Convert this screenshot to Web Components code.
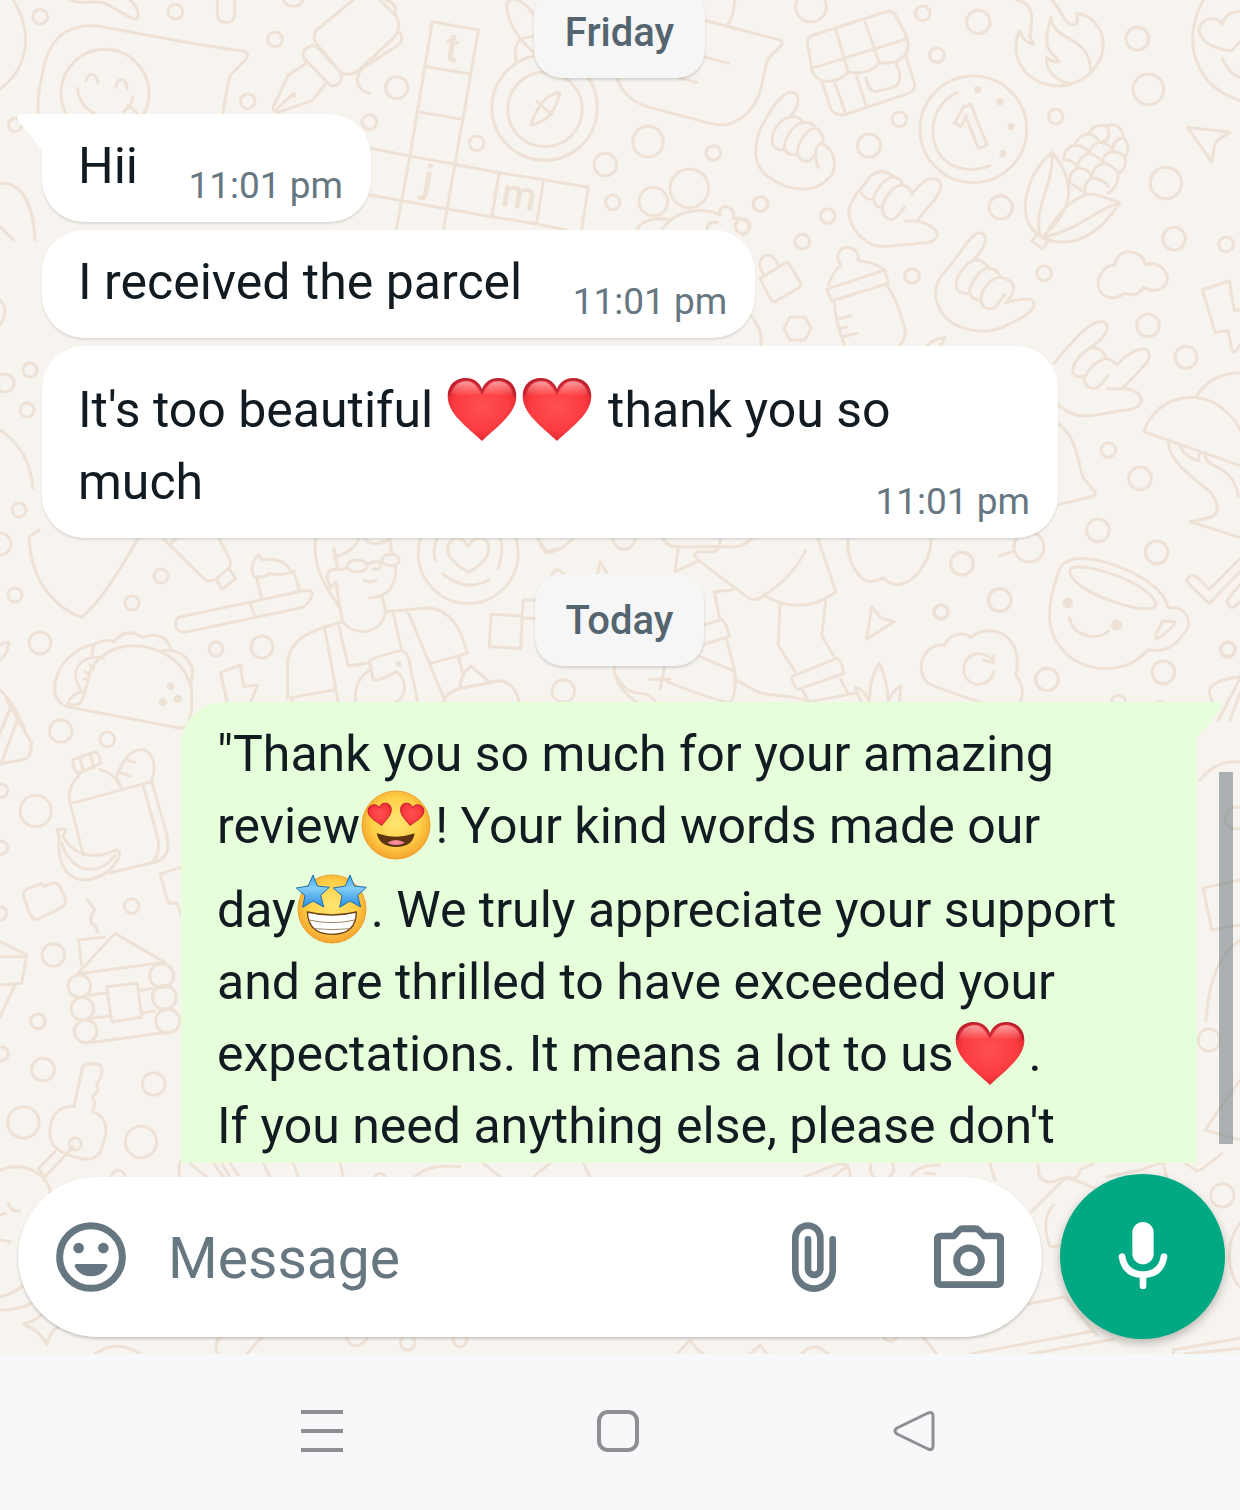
<!DOCTYPE html>
<html lang="en">
<head>
<meta charset="utf-8">
<meta name="viewport" content="width=device-width, initial-scale=1">
<title>Chat</title>
<style>
  html, body { height: 100%; margin: 0; }
  body { display: flex; flex-direction: column; background: #f7f8fa; font-family: Roboto, "Liberation Sans", sans-serif; }
  .keep { white-space: nowrap; }
</style>
</head>
<body>
<chat-screen>
  <date-chip>Friday</date-chip>
  <chat-message tail time="11:01 pm">Hii</chat-message>
  <chat-message time="11:01 pm">I received the parcel</chat-message>
  <chat-message time="11:01 pm">It's too beautiful <chat-emoji name="heart" lead></chat-emoji><chat-emoji name="heart" lead></chat-emoji> thank you so much</chat-message>
  <date-chip>Today</date-chip>
  <chat-message sent tail>"Thank you so much for your amazing <span class="keep">review<chat-emoji name="love"></chat-emoji>!</span> Your kind words made our <span class="keep">day<chat-emoji name="star" lead></chat-emoji>.</span> We truly appreciate your support and are thrilled to have exceeded your expectations. It means a lot to <span class="keep">us<chat-emoji name="heart"></chat-emoji>.</span><br>If you need anything else, please don't</chat-message>
  <message-composer slot="footer"></message-composer>
</chat-screen>
<system-nav></system-nav>

<script>
// Wallpaper doodles, grouped in patches. Each patch has its own origin and scale.
const PATCHES = [
  { at: 'translate(0 0) scale(.333333)',
    d: `M40,0 C90,80 100,190 0,268 M210,0 C250,15 280,0 310,8 C350,25 380,50 405,58 C425,55 412,15 390,0
      M652,0 V45 C655,75 700,75 704,45 V0 M850,0 C860,25 900,25 910,0
      M115,342 C108,290 125,240 132,200 C150,110 210,70 290,78 C330,82 600,140 730,153 Q750,160 738,178 L692,225 Q685,240 668,342
      M258,245 C262,215 290,215 294,250 M348,262 C352,230 378,230 382,265 M233,265 C235,310 265,330 285,342 M398,292 C396,310 385,325 370,335 M385,315 L415,342
      M1060,0 L950,90 Q935,110 948,130 L1020,215 Q1045,232 1075,212 L1185,110 Q1205,80 1190,50 L1140,0 M1160,0 Q1195,15 1185,40
      M1198,95 Q1215,115 1195,135 L1110,190 C1060,210 1060,270 1108,280
      M912,175 C900,150 935,125 955,145 L1020,215 C1035,240 1010,265 990,255 Z M918,190 L865,225 L820,320 Q818,340 840,335 L935,302 L975,255 M828,330 L870,290
      M0,550 C70,545 100,620 105,720 M0,680 L40,720`,
    rings: [[315,280,132],[121,50,22],[526,35,22],[825,118,22],[1190,263,33],[743,304,22],[1108,366,22],[45,375,20]],
    dots: [[880,285,9]] },
  { at: 'translate(360 0) scale(.333333)',
    d: `M217,65 L355,90 L285,492 L250,690 M217,65 L150,468 L108,690 M200,200 L330,222 M175,335 L302,357
      M30,445 L150,468 L418,518 L685,562 L665,690 M30,585 L130,603 L262,627 L395,650 L530,672 L620,690 M418,518 L395,650 M550,543 L530,670
      M600,278 Q545,280 512,375 Q580,365 600,278 M532,305 L575,345 M470,190 Q455,130 490,115 Q510,108 530,112
      M525,50 C480,-20 440,-10 440,20 C445,70 475,120 525,160
      M1030,60 L1260,120 Q1275,128 1255,145 L1225,175 Q1215,200 1205,260 C1185,340 1120,390 1050,370 L870,322 C820,310 785,280 770,230
      M1030,170 L1105,190 M955,233 L1010,247 M1125,0 Q1120,50 1105,72
      M830,690 C850,655 890,655 920,657 M905,690 C950,620 1040,625 1080,645 C1070,610 1130,610 1120,655 C1170,650 1180,690 1150,705 M1040,690 Q1045,660 1070,668`,
    rings: [[554,323,158],[555,328,112],[350,430,22],[864,425,46],[736,494,34],[1060,459,22],[988,565,58],[880,605,43],[758,607,22],[1201,612,22]] },
  { at: 'translate(740 0) scale(.333333)',
    d: `M148,352 C180,320 185,275 150,277 C120,280 80,350 60,390 C40,440 40,500 85,530 C150,580 230,580 270,530 C300,500 275,430 240,432 C222,440 225,480 235,503
      M148,352 C115,360 90,400 98,435 Q115,455 133,447 C130,420 160,370 190,368 Q175,345 148,352 M133,447 Q145,470 172,462 C170,430 200,385 228,385 Q215,365 190,368 M172,462 Q185,490 208,482 L226,465 M228,385 Q255,400 247,432
      M202,130 Q200,112 220,105 L440,35 Q460,32 468,48 L500,110 Q510,145 495,165 Q470,195 418,188 Q390,225 325,217 Q290,250 245,243 Q215,225 215,205 Z
      M215,205 L498,117 M288,90 L325,217 M375,65 L418,188 M245,243 L272,325 Q285,350 320,342 L505,280 Q530,270 522,245 L498,170 M285,250 L315,335 M350,230 L378,315 M378,235 Q385,275 410,275 L465,260 Q485,245 478,215 L468,190
      M652,278 C560,320 560,440 620,485 Q680,525 750,497
      M830,0 C890,10 875,70 870,110 L880,133 Q850,125 838,92 C800,180 870,265 970,257 C1070,240 1110,150 1080,90 Q1050,40 1010,42 Q1020,75 995,75 C970,70 960,20 935,0
      M933,52 C920,100 910,140 940,165 L958,185 Q940,190 920,172 C915,210 950,245 990,250 M933,52 C940,130 1050,100 1052,215
      M1390,0 C1320,130 1370,260 1500,302 M1500,35 Q1455,35 1447,75 C1440,50 1385,45 1376,90 C1385,135 1440,150 1475,152 L1500,125 M1447,175 Q1465,220 1500,232
      M937,457 C860,520 830,640 880,690 L905,712 C990,640 1020,560 937,457 M937,457 C940,560 880,620 900,705 M915,710 C960,620 1020,580 1060,582 L1140,608 C1080,700 1000,750 915,715 M1140,608 C1060,630 1020,690 915,710 M875,722 L893,703 L925,722 L908,747 Z
      M970,480 Q975,440 1005,435 Q1015,405 1045,402 Q1060,370 1100,378 Q1145,365 1150,412 Q1175,440 1155,472 Q1160,510 1135,520 Q1135,560 1105,580
      M970,480 Q1000,475 1012,505 Q1050,505 1055,535 Q1090,535 1105,560 M1005,435 Q1040,440 1047,460 Q1080,470 1090,490 Q1120,495 1135,520 M1045,402 Q1070,405 1078,425 Q1110,430 1120,455 Q1140,455 1155,472 M1100,378 Q1115,400 1100,420 Q1075,430 1078,425 Q1050,440 1047,460 Q1015,470 1012,505 Q985,520 990,548 M1150,412 Q1115,420 1120,455 Q1085,460 1090,490 Q1055,500 1055,535 Q1030,550 1035,580 M990,548 L1035,578
      M1342,382 L1470,397 Q1430,420 1425,430 L1415,485 Z
      M1125,795 Q1130,755 1170,755 Q1210,760 1217,795 C1260,780 1290,820 1280,850 Q1255,885 1210,862 Q1190,895 1155,880 C1110,910 1070,885 1075,840 Q1090,795 1125,795
      M515,585 Q515,560 487,555 Q490,540 460,530 Q425,500 390,530 C370,560 335,590 328,625 C320,660 350,715 400,735 C430,745 480,735 550,728 Q580,728 590,710 C600,690 560,668 530,663 L575,610 C590,590 615,560 595,540 C570,525 540,550 515,585 Z
      M365,580 Q375,600 400,597 C405,570 440,530 460,530 M400,597 Q405,625 428,622 C430,590 465,555 487,555 M428,622 C425,660 460,665 470,650 L495,620 M497,663 H530
      M700,780 C740,740 750,700 715,698 C685,710 650,780 610,820 C560,880 600,960 660,980 C740,1010 790,985 840,955 C880,935 895,910 870,897 Q840,895 795,908
      M700,780 C665,800 640,840 652,870 Q670,885 688,878 C690,850 720,805 745,805 Q730,775 700,780 M688,878 Q700,905 722,898 C725,865 755,830 783,833 Q770,805 745,805 M722,898 C725,930 760,935 775,910 L795,883 M783,833 Q830,840 818,880 L805,900
      M60,835 L135,790 Q145,785 150,795 L182,850 Q182,860 175,864 L105,905 Q98,908 92,898 Z M70,820 C45,790 70,755 95,768 Q105,775 115,795
      M265,855 Q280,810 303,798 C280,760 305,740 325,742 C350,745 358,770 355,782 Q400,785 435,810 M260,868 L435,810 L445,850 L275,903 Z M283,908 Q285,960 315,1040 M440,857 Q470,890 495,990 Q500,1010 478,1040 M292,958 L332,947 M300,985 L320,980 M308,1010 L350,1000
      M150,952 H195 L213,985 L195,1020 H150 L132,985 Z M35,950 Q70,990 62,1040 M558,1040 Q580,1015 615,1013 L600,1040
      M1500,930 L1483,932 L1468,842 L1387,870 L1425,997 L1465,992 L1475,1050 Q1485,1065 1500,1035`,
    rings: [[700,388,160],[213,20,46],[548,40,22],[715,66,35],[591,165,22],[1192,116,34],[1225,268,46],[478,358,22],[947,350,22],[387,437,35],[1278,549,47],[782,622,35],[62,612,22],[263,648,22],[1302,716,34],[1458,733,22],[187,725,22],[516,828,22],[913,820,22],[1224,976,34],[8,678,22]],
    dots: [[713,269,11],[780,305,11],[813,380,11],[789,461,11]] },
  { at: 'translate(940 340) scale(.333333)',
    d: `M342,70 C400,0 450,-60 490,-55 C520,-40 490,0 440,30 M440,30 C470,10 500,40 495,55 C460,70 440,90 432,120 M440,30 C400,60 390,95 405,108 Q420,112 432,108
      M432,120 C440,150 470,150 480,135 L505,105 M495,55 Q520,60 530,75 C570,35 600,20 620,30 C640,50 620,70 600,90 L548,145 C590,150 610,165 602,190 Q590,210 540,212 C470,225 430,235 400,222 Q370,210 350,190 M502,146 L548,147
      M350,247 C410,290 410,350 430,415 L465,455 Q470,465 455,470 L350,495
      M612,275 C640,180 760,140 840,200 Q885,235 900,270 M612,275 L900,377 M768,172 Q810,100 900,98 M685,310 C690,370 770,420 810,455 C840,490 840,530 800,535 L750,545 L900,593 M720,320 Q740,355 775,362 L778,340 M795,345 C800,390 880,370 895,470
      M358,690 C370,650 430,650 490,665 C580,690 670,740 685,803 C740,800 755,840 740,870 C700,930 670,935 622,930 C580,985 500,995 450,980 C370,960 330,890 328,830 Q328,770 358,690
      M390,690 C400,665 520,695 590,735 C650,770 660,800 635,805 C560,815 380,740 390,690 M388,833 C400,890 470,905 505,873 M668,843 L705,845 Q705,860 650,898 Q640,895 668,843
      M900,655 L808,748 L770,710 Q750,700 740,720 Q740,728 808,790 L900,695 M900,733 L862,780 Q865,810 885,800 L900,785 M178,648 L222,633
      M900,1010 Q820,1020 808,1050 Q810,1080 825,1095 M900,1015 L835,1140 M900,1060 L870,1140`,
    rings: [[738,52,33],[267,621,45],[505,330,22],[600,415,34],[474,571,34],[650,637,34],[66,671,34],[179,780,34],[3,815,20],[863,930,22],[670,997,34],[321,1018,34],[535,1088,22],[660,1115,30]],
    dots: [[383,789,16],[530,855,17]] },
  { at: 'translate(0 530) scale(.357143 .333333)',
    d: `M110,0 L82,20 C85,170 170,240 228,262 Q290,210 392,15 M458,28 L575,150 Q590,155 605,148 L640,115 Q650,105 640,80 L608,15 M475,45 L500,18 M605,148 L622,178 L660,145 L640,115
      M722,75 L735,90 Q790,80 812,120 Q830,130 837,182 M722,75 Q695,110 712,140 Q740,145 755,130 Q780,140 825,125 M718,142 L733,205
      M500,262 L850,182 Q885,180 870,205 Q860,230 835,235 L525,305 Q490,310 492,280 Q492,265 500,262 M700,218 L712,255
      M885,15 C870,120 920,180 955,240 M940,155 L958,270 Q970,300 1015,305 Q1070,300 1080,245 L1070,200 M1035,203 Q1110,200 1108,110 M1090,18 L1098,70 M935,55 L945,115 M935,80 Q990,70 1008,18 M1020,20 Q1030,55 1090,30
      M1028,105 Q1045,90 1070,98 M940,120 L973,115 M1065,100 Q1070,120 1045,118 M1020,150 Q1035,162 1052,150 M940,118 Q910,120 918,150 L925,175 L938,160
      M972,110 A28,18 0 1,0 1028,106 A28,18 0 1,0 972,110 M1070,92 A24,17 0 1,0 1118,88 A24,17 0 1,0 1070,92
      M958,275 C880,300 810,320 805,400 L805,505 L935,480 M818,505 V520 M908,290 L948,520 M948,285 L975,408 L1035,398 M1080,245 L1200,233 C1260,240 1290,290 1308,370 L1205,400 M1100,245 L1125,360 M1142,245 L1245,510
      M1045,450 L1035,395 Q1035,385 1120,362 Q1140,362 1145,390 L1170,520 M1045,450 Q1060,455 1110,425 Q1140,450 1130,490 Q1120,515 1100,520 M1035,420 Q990,450 995,520
      M1285,385 L1298,440 M1290,470 Q1285,440 1318,408 L1370,455 M1240,520 Q1250,485 1290,475 L1400,452 Q1440,455 1455,520
      M1171,70 A140,150 0 1,0 1451,70 A140,150 0 1,0 1171,70 M1218,90 Q1210,50 1228,18 M1395,115 Q1412,65 1400,18 M1240,132 Q1310,190 1370,148 M1311,50 Q1300,25 1275,20 C1240,50 1245,85 1311,127 C1370,95 1385,50 1350,20 Q1320,28 1311,50
      M1375,253 L1462,258 L1458,355 L1370,350 Z M1462,258 L1465,210 H1500 M1462,265 H1500 M1500,15 L1530,65 L1568,55
      M190,530 C140,520 140,430 200,375 Q235,345 262,345 Q290,325 320,335 Q350,290 400,322 Q460,300 478,355 M262,345 L258,375
      M190,530 L505,595 Q545,590 535,470 C500,330 300,300 250,430 Q240,490 225,520 Q200,530 190,520 Q200,490 240,480 M455,362 Q520,355 540,420 L535,460 M290,385 C230,370 190,420 225,475 M252,405 L262,415 M238,425 L248,432 M235,448 L245,446
      M635,515 L618,427 L673,405 L682,470 L722,465 L700,520 M0,345 Q20,335 25,338 Q20,375 0,390 M0,480 Q40,520 70,600`,
    dots: [[478,469,11],[456,516,12],[498,507,12],[1116,402,8]] },
  { at: 'translate(540 530) scale(.333333)',
    d: `M0,40 Q10,70 30,68 Q80,55 105,15 M172,135 L180,95 L205,135 M35,135 Q50,105 75,135 M365,15 Q375,50 410,50 H590 Q620,45 645,15 M415,50 L405,125 L470,95
      M540,15 Q545,60 520,65 L470,65 Q455,75 480,95 L620,200 Q645,220 670,197 Q750,150 797,62 M830,15 L888,187 Q780,260 675,197 M578,180 L523,185 L540,270
      M720,222 L715,345 L765,425 M857,215 L845,318 L885,383 M755,440 L890,385 Q905,390 912,430 L775,478 Q760,470 755,440 M787,482 L808,515 L945,490 M902,448 L925,492
      M485,287 L545,268 Q560,275 568,320 L485,345 M560,330 L585,425 L480,380 M585,425 Q590,500 570,515 Q550,522 380,455 M590,450 C640,480 650,490 700,495 Q770,500 808,515 M330,448 H390 M375,405 L360,478 M222,405 Q220,470 295,520 M230,440 Q260,490 300,490 Q330,490 350,520
      M925,15 C915,80 950,150 990,155 Q1020,150 1032,143 Q1045,165 1080,163 C1130,155 1180,80 1172,15 M995,232 L980,327 L1062,275 L1025,265 Z
      M965,520 L945,470 Q970,475 988,515 Q990,440 1018,400 Q1040,440 1045,515 Q1060,480 1083,467 L1078,520
      M1435,520 C1445,510 1460,480 1427,435 Q1440,390 1420,345 C1400,305 1340,285 1292,322 C1280,310 1240,300 1213,345 C1150,340 1120,420 1165,460 Q1180,470 1330,520 M1362,425 C1350,470 1290,480 1272,430 C1265,380 1310,350 1358,388 M1362,375 L1358,398 L1332,390`,
    rings: [[252,25,33],[1266,101,34],[1379,210,34],[1203,246,22],[70,483,34]] },
  { at: 'translate(0 700) scale(.333333)',
    d: `M20,0 L95,130 Q95,170 75,178 L0,192 M30,25 L0,100 M50,65 L5,185
      M218,180 L280,157 Q300,155 302,190 L240,218 Q220,220 218,180 M240,175 L250,215 M272,165 L282,205 M240,222 Q205,255 208,300 L250,465 M300,208 Q350,225 362,265
      M350,230 C365,180 400,140 435,150 C470,170 465,215 455,245 M350,230 L365,268 M375,178 L405,187 M362,218 L392,228 M215,310 L455,245 L500,400 Q515,470 470,485 L330,518 M430,258 L475,420 Q480,470 455,487
      M170,388 H198 L190,410 C220,470 290,480 345,450 Q365,450 355,475 C320,540 240,560 200,515 Q170,480 178,410 Z M185,430 C210,510 290,540 345,465
      M75,600 Q60,580 85,565 L125,550 Q130,565 145,555 Q170,540 180,560 L197,600 Q200,615 180,625 L115,657 Q95,662 85,630 Z M262,598 L285,630 Q265,655 275,670 Q292,680 292,695
      M550,500 L480,522 L505,610 L530,608 L550,660 M232,822 L345,700 L495,787 Z M245,795 L235,720 L312,712
      M268,885 L325,878 M272,955 L330,948 M280,1027 L500,997 M320,860 L412,850 L425,952 L335,965 Z M420,872 L455,865 M425,940 L465,933
      M0,725 L80,765 L65,850 L0,855 M0,770 H80 M45,855 L0,950
      M222,1220 L248,1100 Q260,1085 300,1095 Q312,1110 300,1135 L290,1155 L295,1170 L278,1190 L285,1210 L278,1235 C320,1250 325,1290 310,1330 C300,1385 260,1380 240,1375 C180,1360 145,1340 150,1290 C155,1230 190,1218 222,1220 Z
      M165,1355 L115,1405 L135,1430 L220,1340 M550,1370 Q530,1400 540,1430 M570,1390 L620,1430 M640,1390 L670,1430 M665,1390 L690,1430 M690,1390 L715,1425`,
    rings: [[182,93,34],[322,118,22],[3,272,20],[107,333,47],[3,443,20],[0,640,20],[395,618,22],[160,765,34],[114,964,22],[5,1061,20],[129,1109,34],[461,1152,34],[70,1267,47],[423,1326,47],[355,1433,22],[238,858,34],[247,926,34],[257,994,34],[485,827,36],[493,892,36],[503,963,36],[226,1332,18]] },
  { at: 'translate(0 1150) scale(.333333)',
    d: `M0,60 C80,30 150,80 150,130 M25,160 Q35,190 60,182 M0,195 L15,190 M0,270 L30,275 M0,480 Q80,480 120,440 M0,440 Q50,430 75,400
      M185,530 Q155,530 140,585 Q125,545 70,522 Q130,505 130,480 M285,612 Q350,565 420,612 M655,612 Q635,580 670,555 M740,612 L792,555 M1035,555 Q1050,590 1070,587 Q1095,585 1105,555
      M790,40 L810,80 M880,40 L895,80 M1020,40 L1030,80 M1125,80 Q1140,60 1155,80 M1245,80 Q1290,40 1380,50 M1450,40 L1500,80 M1600,80 L1650,40 M1750,40 L1770,80`,
    rings: [[1223,578,22],[1380,570,20]] },
  { at: 'translate(760 1150) scale(.333333)',
    d: `M135,80 L225,45 Q270,30 270,80 M220,80 L265,45 M455,80 Q465,45 540,45 M495,70 L525,72 M690,40 L705,90 M835,45 Q830,100 880,95 L905,85 Q960,90 960,60 L1000,40 M1040,80 L1140,60 L1200,40 M1210,40 L1220,80
      M815,185 L920,80 L1005,115 M880,165 Q840,210 870,290 L905,287 M805,462 L915,440 L1010,555 M630,612 L1000,543 M810,612 L1060,568 M1240,612 V600 L1440,565 M1275,612 L1440,595
      M1275,40 L1310,63 Q1320,65 1385,10 M1440,220 Q1400,270 1410,340 Q1420,400 1440,410 M480,550 L530,612 M125,612 Q160,570 205,612 M-250,612 L-210,570 Q-190,600 -170,612 M-30,612 L0,585 L20,612`,
    rings: [[366,55,35],[1387,136,35],[390,552,22]] },
  { at: 'translate(0 0)',
    d: `M0,430 Q30,450 33,488 M0,300 Q10,310 0,325 M1240,880 L1203,888 L1212,930 L1240,925 M1240,940 Q1210,960 1206,1020 M1240,1080 L1205,1130 L1240,1140 M1200,780 Q1215,760 1240,762`,
    rings: [[5,383,9],[30,370,7],[27,410,7],[19,510,7],[0,544,11],[161,576,7],[15,595,7],[132,603,7],[40,643,11],[262,647,11],[216,649,7],[1228,649,7],[1236,818,11],[1209,1040,11]] }
];

const circles = (list, cls) => (list || []).map(([x, y, r]) => `<circle class="${cls}" cx="${x}" cy="${y}" r="${r}"/>`).join('');

class ChatWallpaper extends HTMLElement {
  constructor() {
    super();
    this.attachShadow({mode: 'open'}).innerHTML = `
      <style>
        :host { display: block; background: #f7f3ee; overflow: hidden; }
        svg { display: block; width: 100%; height: 100%; }
        path, .ring { fill: none; stroke: #eee2d6; stroke-width: 3px; stroke-linejoin: round; stroke-linecap: round; vector-effect: non-scaling-stroke; }
        .dot, text { fill: #eee2d6; }
        text { font: 500 40px Roboto, sans-serif; text-anchor: middle; }
        .coin { font: bold 62px "Open Sans", sans-serif; fill: none; stroke: #eee2d6; stroke-width: 3px; }
      </style>
      <svg viewBox="0 0 1240 1354" preserveAspectRatio="xMidYMin slice" aria-hidden="true">
        ${PATCHES.map(p => `<g transform="${p.at}"><path d="${p.d}"/>${circles(p.rings, 'ring')}${circles(p.dots, 'dot')}</g>`).join('')}
        <text transform="translate(450 61) rotate(10)">t</text>
        <text transform="translate(426 192) rotate(10)">j</text>
        <text transform="translate(517 208) rotate(10)">m</text>
        <text class="coin" transform="translate(980 148) rotate(-22)">1</text>
      </svg>
    `;
  }
}
customElements.define('chat-wallpaper', ChatWallpaper);

const HEART = 'M105,201 C60,158 2,120 2,66 C2,30 28,12 56,12 C80,12 98,25 105,46 C112,25 130,12 154,12 C182,12 208,30 208,66 C208,120 150,158 105,201Z';
const STAR = 'M0,-50 L13,-17 L49,-13 L23,11 L32,46 L0,28 L-31,47 L-24,12 L-50,-11 L-14,-17Z';
const FACE = `<circle cx="105" cy="105" r="102" fill="url(#skin)" stroke="#f0a02c" stroke-width="3"/>`;
const EMOJI = {
  heart: `<path d="${HEART}" fill="url(#red)"/><path d="M6,66 C8,32 32,16 56,16 C80,16 96,30 105,54 C114,30 130,16 154,16 C180,16 202,32 204,66" fill="none" stroke="#a51f33" stroke-width="6" opacity=".75"/>
    <path d="M14,66 C16,36 36,22 57,22 C78,22 90,36 100,60Z M110,60 C120,36 132,22 153,22 C176,22 194,36 196,66Z" fill="url(#shine)"/>`,
  love: `${FACE}<g stroke="#c01625" stroke-width="8"><path transform="translate(22 38) rotate(-8 36 36) scale(.34)" d="${HEART}" fill="url(#red)"/><path transform="translate(116 38) rotate(8 36 36) scale(.34)" d="${HEART}" fill="url(#red)"/></g>
    <path d="M47,130 Q105,150 161,130 Q156,171 105,171 Q56,171 47,130Z" fill="#5f3510"/><path d="M79,158 Q105,142 132,158 Q105,172 79,158Z" fill="#f88a97"/>`,
  star: `${FACE}<path d="M31,114 Q105,132 178,114 Q178,181 105,181 Q34,181 31,114Z" fill="#fff" stroke="#6b4318" stroke-width="4"/><path d="M36,138 Q105,154 174,138 M52,164 Q105,170 158,164" fill="none" stroke="#9a8568" stroke-width="3"/>
    <g fill="url(#blue)" stroke="#1f6fae" stroke-width="3" stroke-linejoin="round"><path transform="translate(48 53)" d="${STAR}"/><path transform="translate(159 53)" d="${STAR}"/></g>`
};

class ChatEmoji extends HTMLElement {
  constructor() {
    super();
    this.attachShadow({mode: 'open'});
  }
  connectedCallback() {
    this.shadowRoot.innerHTML = `
      <style>
        :host { display: inline-block; width: 72px; height: 70px; margin: 0 2px 0 1px; vertical-align: -17px; }
        :host([lead]) { padding-top: 12px; }
        svg { display: block; width: 70px; height: 70px; overflow: visible; }
      </style>
      <svg viewBox="0 0 210 210" aria-hidden="true">
        <defs>
          <radialGradient id="red" cx=".5" cy=".45" r=".6"><stop offset="0" stop-color="#ff5050"/><stop offset=".65" stop-color="#fb3c40"/><stop offset="1" stop-color="#d7222c"/></radialGradient>
          <linearGradient id="shine" x2="0" y2="1"><stop offset="0" stop-color="#fff" stop-opacity=".5"/><stop offset="1" stop-color="#fff" stop-opacity="0"/></linearGradient>
          <radialGradient id="skin" cx=".5" cy=".45" r=".55"><stop offset="0" stop-color="#ffe673"/><stop offset=".65" stop-color="#ffcf45"/><stop offset="1" stop-color="#f4a32f"/></radialGradient>
          <linearGradient id="blue" x2="0" y2="1"><stop offset="0" stop-color="#3fa4ee"/><stop offset=".4" stop-color="#83cdf8"/><stop offset="1" stop-color="#2a8ee2"/></linearGradient>
        </defs>
        ${EMOJI[this.getAttribute('name')]}
      </svg>
    `;
  }
}
customElements.define('chat-emoji', ChatEmoji);

class DateChip extends HTMLElement {
  constructor() {
    super();
    this.attachShadow({mode: 'open'}).innerHTML = `
      <style>
        :host { display: block; align-self: center; margin: 28px 0; padding: 17px 31px 15px; border-radius: 28px; background: #f6f6f6; box-shadow: 0 2px 3px rgba(0,0,0,0.14); color: #54656f; font-size: 40px; font-weight: 500; line-height: 60px; }
        :host(:first-child) { margin-top: 0; }
      </style>
      <slot></slot>
    `;
  }
}
customElements.define('date-chip', DateChip);

class ChatMessage extends HTMLElement {
  constructor() {
    super();
    this.attachShadow({mode: 'open'});
  }
  connectedCallback() {
    const time = this.getAttribute('time');
    this.shadowRoot.innerHTML = `
      <style>
        :host { display: block; position: relative; box-sizing: border-box; align-self: flex-start; max-width: 1016px; padding: 16px 36px 20px; border-radius: 42px; background: #fff; box-shadow: 0 2px 2px rgba(0,0,0,0.1); color: #111b21; font-size: 50px; line-height: 72px; }
        :host([sent]) { align-self: flex-end; padding-bottom: 60px; background: #e6ffda; box-shadow: none; }
        :host([sent][tail]) { border-top-right-radius: 0; }
        :host([tail]:not([sent])) { border-top-left-radius: 0; }
        .tail { position: absolute; top: 0; right: 100%; width: 25px; height: 40px; }
        :host([sent]) .tail { right: auto; left: 100%; transform: scaleX(-1); }
        .gap { display: inline-block; width: 197px; }
        time { position: absolute; right: 28px; bottom: 14px; color: #667781; font-size: 37px; line-height: 44px; }
      </style>
      ${this.hasAttribute('tail') ? `<svg class="tail" viewBox="0 0 25 40" aria-hidden="true"><path d="M26,0 H5 Q-2,2 2,8 L26,37Z" fill="${this.hasAttribute('sent') ? '#e6ffda' : '#fff'}"/></svg>` : ''}
      <slot></slot>${time ? `<span class="gap"></span><time>${time}</time>` : ''}
    `;
  }
}
customElements.define('chat-message', ChatMessage);

class MessageComposer extends HTMLElement {
  constructor() {
    super();
    this.attachShadow({mode: 'open'}).innerHTML = `
      <style>
        :host { display: flex; align-items: center; gap: 18px; padding: 11px 15px 15px 18px; }
        .field { display: flex; flex: 1; align-items: center; min-width: 0; height: 160px; box-sizing: border-box; padding: 0 38px; border-radius: 80px; background: #fff; box-shadow: 0 2px 3px rgba(0,0,0,0.18); color: #667781; }
        button { flex: none; padding: 0; border: 0; background: none; color: inherit; }
        svg { display: block; width: 70px; height: 70px; }
        input { flex: 1; min-width: 0; margin: 0 42px; padding: 4px 0 0; border: 0; outline: 0; background: none; color: #111b21; font: 57px/72px Roboto, "Liberation Sans", sans-serif; }
        input::placeholder { color: #667781; opacity: 1; }
        .clip { margin-right: 98px; }
        .clip svg { width: 44px; }
        .mic { display: grid; place-items: center; width: 165px; height: 165px; border-radius: 50%; background: #00a884; box-shadow: 0 4px 10px rgba(0,0,0,0.25); color: #fff; }
      </style>
      <div class="field">
        <button type="button" aria-label="Emoji">
          <svg viewBox="0 0 210 210" fill="currentColor"><circle cx="105" cy="105" r="94" fill="none" stroke="currentColor" stroke-width="21"/><circle cx="68" cy="78" r="16"/><circle cx="142" cy="78" r="16"/><path d="M62,126 H148 Q157,127 153,135 Q138,163 105,163 Q72,163 57,135 Q53,127 62,126Z"/></svg>
        </button>
        <input type="text" placeholder="Message" aria-label="Message">
        <button class="clip" type="button" aria-label="Attach">
          <svg viewBox="0 0 132 210" fill="none" stroke="currentColor" stroke-width="20" stroke-linecap="round"><path d="M122,52 V144 A56,56 0 0 1 10,144 V48 A37,37 0 0 1 85,48 V140 A18,18 0 0 1 48,140 V52"/></svg>
        </button>
        <button type="button" aria-label="Camera">
          <svg viewBox="0 0 210 210" fill="none" stroke="currentColor" stroke-width="21"><path fill="currentColor" stroke="none" fill-rule="evenodd" d="M20,32 H55 L69,17 Q76,10 86,10 H124 Q134,10 141,17 L155,32 H190 Q210,32 210,52 V178 Q210,198 190,198 H20 Q0,198 0,178 V52 Q0,32 20,32Z M21,52 V178 H189 V52 H146 L127,31 H83 L64,52Z"/><circle cx="105" cy="115" r="37"/></svg>
        </button>
      </div>
      <button class="mic" type="button" aria-label="Voice message">
        <svg viewBox="0 0 210 210" fill="none" stroke="currentColor" stroke-width="20" stroke-linecap="round"><rect x="73" y="0" width="64" height="127" rx="32" fill="currentColor" stroke="none"/><path d="M42,104 C49,145 75,158 105,158 C135,158 161,145 168,104 M105,158 V191"/></svg>
      </button>
    `;
  }
}
customElements.define('message-composer', MessageComposer);

class ChatScreen extends HTMLElement {
  constructor() {
    super();
    this.attachShadow({mode: 'open'}).innerHTML = `
      <style>
        :host { display: flex; position: relative; flex: 1; flex-direction: column; min-height: 0; }
        chat-wallpaper { position: absolute; inset: 0; }
        .log { position: relative; display: flex; flex: 1; flex-direction: column; gap: 8px; min-height: 0; padding: 0 43px 0 42px; overflow-y: auto; scrollbar-width: none; }
        ::slotted(*) { flex: none; }
        .thumb { position: absolute; top: 57%; right: 7px; width: 14px; height: 372px; background: rgba(110,122,130,0.55); }
        footer { position: relative; }
      </style>
      <chat-wallpaper></chat-wallpaper>
      <div class="log"><slot></slot></div>
      <div class="thumb"></div>
      <footer><slot name="footer"></slot></footer>
    `;
  }
  connectedCallback() {
    // the log opens a little way down, under the first date
    requestAnimationFrame(() => { this.shadowRoot.querySelector('.log').scrollTop = 14; });
  }
}
customElements.define('chat-screen', ChatScreen);

class SystemNav extends HTMLElement {
  constructor() {
    super();
    this.attachShadow({mode: 'open'}).innerHTML = `
      <style>
        :host { display: flex; flex: none; justify-content: center; align-items: center; gap: 254px; height: 156px; padding: 0 4px 2px 0; box-sizing: border-box; background: #f7f8fa; }
        button { padding: 0; border: 0; background: none; color: #8e8f92; }
        svg { display: block; width: 42px; height: 42px; fill: none; stroke: currentColor; stroke-width: 4; stroke-linejoin: round; }
      </style>
      <button type="button" aria-label="Recent apps"><svg viewBox="0 0 42 42"><path d="M0,2 H42 M0,21 H42 M0,40 H42"/></svg></button>
      <button type="button" aria-label="Home"><svg viewBox="0 0 42 42"><rect x="2" y="2" width="38" height="38" rx="9"/></svg></button>
      <button type="button" aria-label="Back"><svg viewBox="0 0 42 42"><path stroke-width="3" d="M35,3 L4,18 Q0,21 4,24 L35,39 Q40,41 40,36 V6 Q40,1 35,3Z"/></svg></button>
    `;
  }
}
customElements.define('system-nav', SystemNav);
</script>
</body>
</html>
